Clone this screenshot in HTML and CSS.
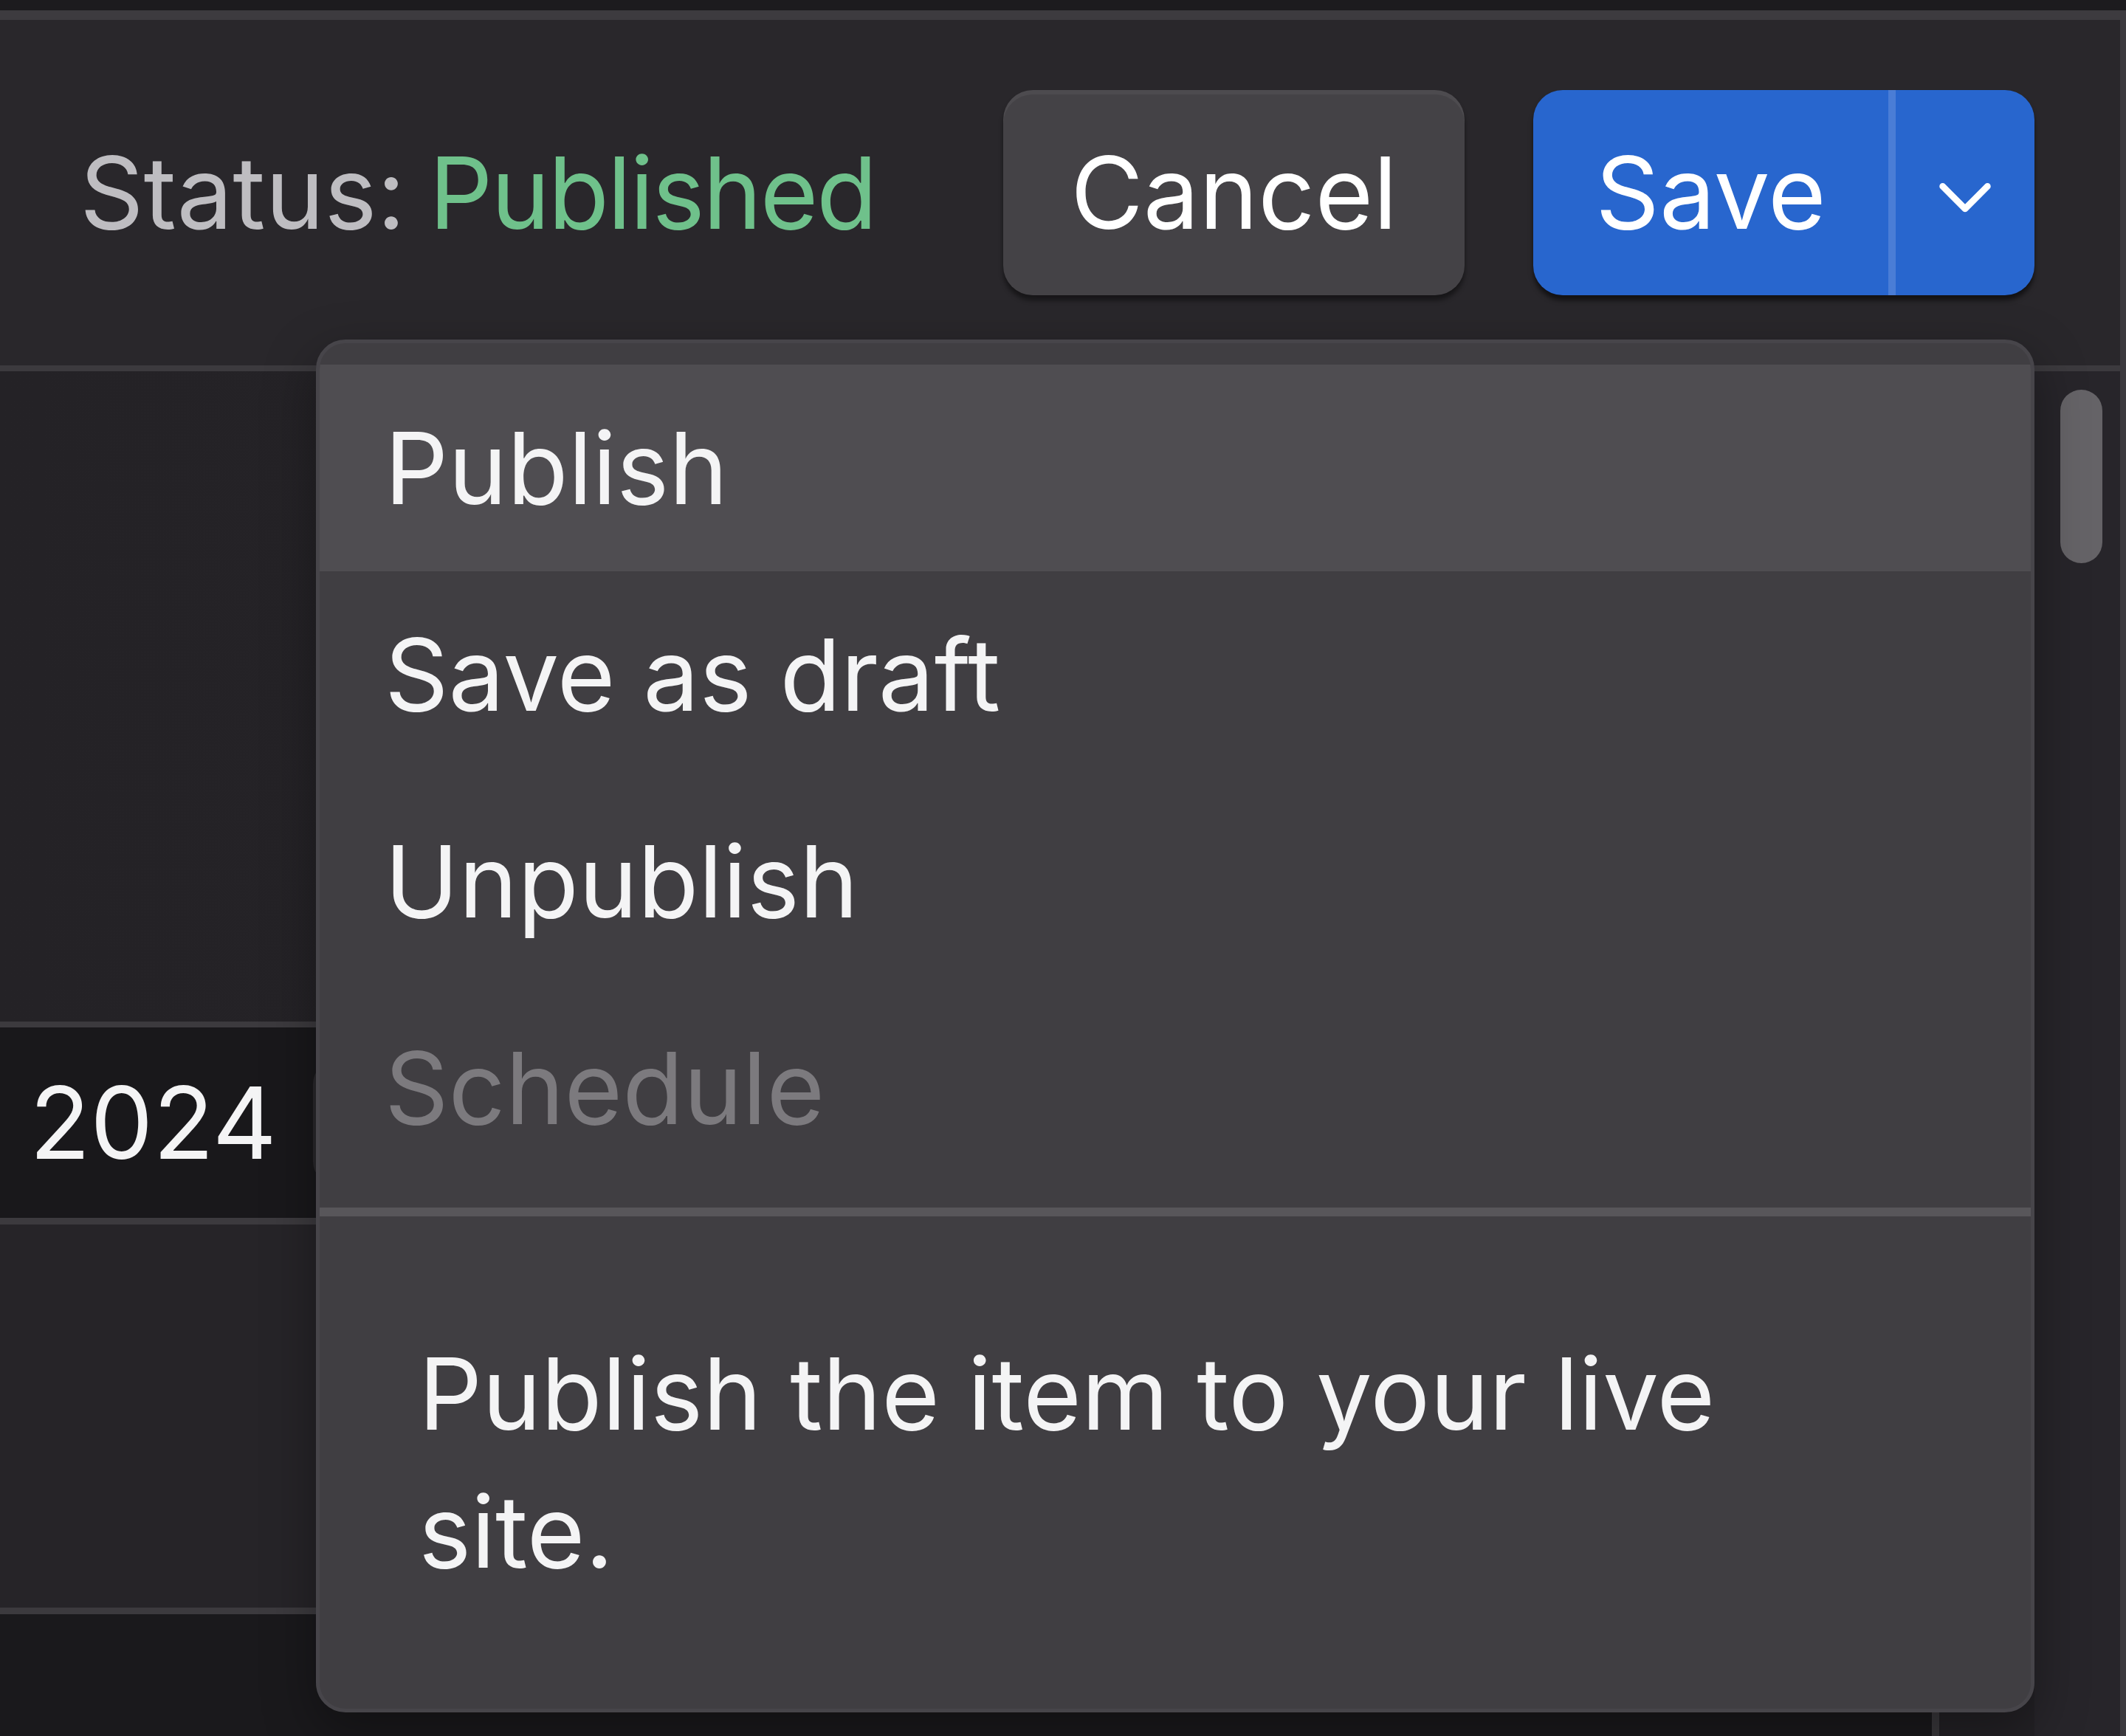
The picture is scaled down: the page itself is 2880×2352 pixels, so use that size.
FILE: index.html
```html
<!DOCTYPE html>
<html lang="en">
<head>
<meta charset="utf-8">
<title>Save menu</title>
<link rel="stylesheet" href="styles.css">
</head>
<body>
<div class="app">
  <div class="topbar"></div>
  <header class="header">
    <div class="status"><span class="status-label">Status:</span> <span class="status-value">Published</span></div>
    <div class="actions">
      <button class="btn btn-cancel" type="button">Cancel</button>
      <div class="split">
        <button class="btn split-main" type="button">Save</button>
        <span class="split-divider"></span>
        <button class="btn split-caret" type="button" aria-label="More save options">
          <svg class="chevron" viewBox="0 0 16 10" width="74" height="46" aria-hidden="true">
            <path d="M1.4 1.4 L8 8 L14.6 1.4" fill="none" stroke="#ffffff" stroke-width="1.9" stroke-linecap="round" stroke-linejoin="round"/>
          </svg>
        </button>
        <div class="menu" role="menu">
          <ul class="menu-list">
            <li class="menu-item is-active" role="menuitem">Publish</li>
            <li class="menu-item" role="menuitem">Save as draft</li>
            <li class="menu-item" role="menuitem">Unpublish</li>
            <li class="menu-item is-disabled" role="menuitem">Schedule</li>
          </ul>
          <div class="menu-desc">
            <p>Publish the item to your live site.</p>
          </div>
        </div>
      </div>
    </div>
  </header>
  <main class="content">
    <div class="fields">
      <div class="row row-text"></div>
      <div class="row row-date">
        <div class="field-year">2024</div>
        <div class="field-next"></div>
      </div>
      <div class="row row-area"></div>
      <div class="row row-last">
        <div class="field-last"></div>
        <div class="field-rest"></div>
      </div>
    </div>
    <div class="gutter"><div class="thumb"></div></div>
  </main>
</div>
</body>
</html>
```

FILE: styles.css
```css
* { box-sizing: border-box; }

html, body {
  margin: 0;
  padding: 0;
  background: #1c1b1e;
}

body {
  font-family: Inter, "Noto Sans", "Liberation Sans", sans-serif;
  font-size: 135px;
  color: #f4f4f5;
}

.app {
  width: 2880px;
  height: 2352px;
  overflow: hidden;
  display: flex;
  flex-direction: column;
  background: #1c1b1e;
}

.topbar {
  height: 27px;
  flex: none;
  background: #1c1b1e;
  border-bottom: 13px solid #3d3b3f;
}

.header {
  height: 476px;
  flex: none;
  display: flex;
  align-items: center;
  justify-content: space-between;
  padding: 0 116px 0 108px;
  background: #29272b;
  border-bottom: 8px solid #3c3a3e;
  border-right: 8px solid #3c3a3e;
  position: relative;
  z-index: 2;
}

.status {
  white-space: nowrap;
  line-height: 1;
}

.status-label { color: #bebdc1; }
.status-value {
  color: #6fc18b;
  letter-spacing: -2.4px;
  margin-left: -6px;
}

.actions {
  display: flex;
  align-items: center;
  gap: 93px;
}

.btn {
  font: inherit;
  color: #ffffff;
  border: none;
  margin: 0;
  cursor: pointer;
  height: 278px;
  line-height: 1;
  display: flex;
  align-items: center;
  justify-content: center;
}

.btn-cancel {
  width: 625px;
  border-radius: 40px;
  background: #444246;
  box-shadow: inset 0 6px 0 rgba(255, 255, 255, 0.05), 0 7px 6px rgba(0, 0, 0, 0.45);
}

.split {
  position: relative;
  display: flex;
  height: 278px;
  border-radius: 40px;
  background: #2866ce;
  box-shadow: 0 7px 6px rgba(0, 0, 0, 0.55);
}

.split-main {
  width: 481px;
  background: transparent;
  border-radius: 40px 0 0 40px;
}

.split-divider {
  width: 10px;
  background: #4a7dd6;
}

.split-caret {
  width: 188px;
  background: transparent;
  border-radius: 0 40px 40px 0;
}

.chevron {
  display: block;
  margin-top: 16px;
}

/* Dropdown menu overlay */
.menu {
  position: absolute;
  right: 0;
  top: calc(100% + 60px);
  width: 2328px;
  background: #403e42;
  border: 5px solid #47454a;
  border-radius: 40px;
  padding-top: 29px;
  box-shadow: 0 24px 70px rgba(0, 0, 0, 0.35);
  overflow: hidden;
}

.menu-list {
  list-style: none;
  margin: 0;
  padding: 0 0 22px;
}

.menu-item {
  height: 280px;
  display: flex;
  align-items: center;
  padding-left: 88px;
  line-height: 1;
  color: #f4f4f5;
  white-space: nowrap;
}

.menu-item.is-active { background: #4f4d51; }
.menu-item.is-disabled { color: #7c7a7e; }

.menu-desc {
  border-top: 12px solid #58565a;
  padding: 147px 0 146px 134px;
}

.menu-desc p {
  margin: 0;
  max-width: 1900px;
  line-height: 187px;
  color: #f4f4f5;
}

/* Page content behind */
.content {
  flex: 1;
  display: flex;
  min-height: 0;
  border-right: 8px solid #3c3a3e;
}

.fields {
  flex: 1;
  display: flex;
  flex-direction: column;
}

.row { flex: none; }

.row-text {
  height: 889px;
  background: linear-gradient(90deg, #242226 0%, #262428 60%, #222024 100%);
  border-bottom: 8px solid #3c3a3e;
}

.row-date {
  height: 267px;
  display: flex;
  align-items: center;
  background: #19181b;
  border-bottom: 9px solid #3c3a3e;
}

.field-year {
  width: 424px;
  height: 100%;
  display: flex;
  align-items: center;
  padding-left: 40px;
  line-height: 1;
  color: #f4f4f5;
}

.field-next {
  width: 300px;
  height: 166px;
  border-radius: 30px;
  background: #2a282c;
}

.row-area {
  height: 528px;
  background: #262428;
  border-bottom: 9px solid #3c3a3e;
}

.row-last {
  flex: 1;
  display: flex;
}

.field-last {
  width: 2627px;
  background: #1a191c;
  border-right: 10px solid #3a383c;
}

.field-rest {
  flex: 1;
  background: #232125;
}

.gutter {
  width: 116px;
  flex: none;
  background: #27252a;
  padding: 25px 0 0 35px;
}

.thumb {
  width: 57px;
  height: 235px;
  border-radius: 29px;
  background: #656367;
}
```
